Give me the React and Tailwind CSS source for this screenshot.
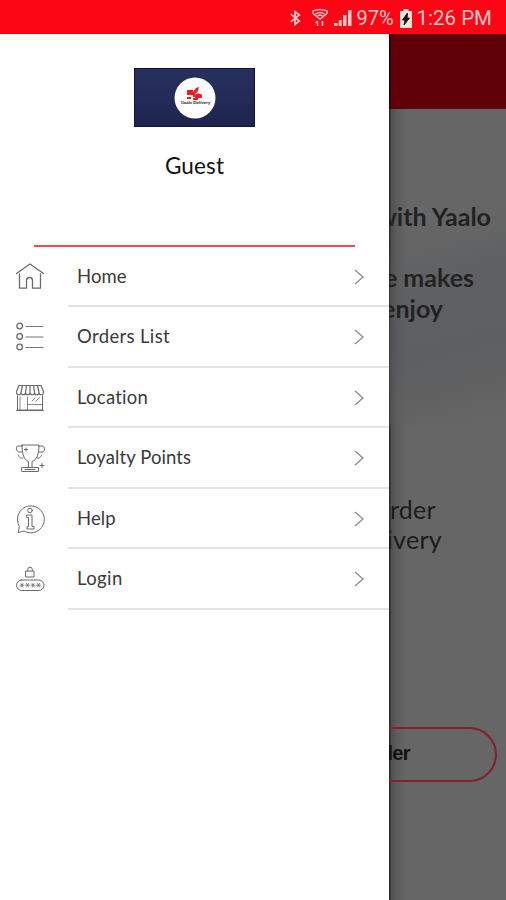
import React from 'react';

function Icon({ children }) {
  return (
    <svg className="h-8 w-8 shrink-0" viewBox="0 0 32 32" fill="none" stroke="#6a6a6a" strokeWidth="1" strokeLinecap="round" strokeLinejoin="round">
      {children}
    </svg>
  );
}

const HomeIcon = () => (
  <Icon>
    <path d="M2.500 12.500 16 3l13.500 9.500M5.500 13v14.200h7v-7.700a3 3 0 0 1 6 0v7.700h8V13" strokeWidth="1.300" />
  </Icon>
);

const ListIcon = () => (
  <Icon>
    <g strokeWidth="1.300">
      <circle cx="5.700" cy="5" r="2.800" />
      <circle cx="5.700" cy="15.500" r="2.800" />
      <circle cx="5.700" cy="26" r="2.800" />
    </g>
    <path d="M12 5.500h17M12 16h17M12 26.500h17" stroke="#777" strokeWidth="1.200" />
  </Icon>
);

const StoreIcon = () => (
  <Icon>
    <path d="M5 3.500h22l2.500 6v1a2.250 2.250 0 0 1-4.500 0 2.250 2.250 0 0 1-4.500 0 2.250 2.250 0 0 1-4.500 0 2.250 2.250 0 0 1-4.500 0 2.250 2.250 0 0 1-4.500 0 2.250 2.250 0 0 1-4.500 0v-1zM7 10.500l1.500-7M11.500 10.500l1-7M16 10.500v-7M20.500 10.500l-1-7M25 10.500l-1.500-7" strokeWidth="1.200" />
    <path d="M3.500 14v14h25V14M2.500 28.500h27" />
    <path d="M6 28V15M13.500 28V15M14 22.500h14M18 19l3-3M21.500 19.500l4-4" strokeWidth=".8" />
  </Icon>
);

const TrophyIcon = () => (
  <Icon>
    <path d="M8 3h17c0 9-2 15-7 16.500v6M8 3c0 9 2 15 6.500 16.500v6" />
    <path d="M8.500 4H4C1.500 4 2 9 4.500 10H8M24.500 4H28c3 0 3.500 6 0 6h-3M4.500 13c0 2 2 4 4.500 3M27.500 13c-.5 2-2 4-4.500 3M8 25.500h16.500v4H8zM11 27.500h10" />
    <path d="M12 6v3M10.500 7.500h3M28 21.500v4M26 23.500h4" />
  </Icon>
);

const HelpIcon = () => (
  <Icon>
    <path d="M5.200 23.200A13.500 13.500 0 1 1 10 28l-5.500 1.500z" />
    <circle cx="16" cy="7.500" r="2.300" />
    <path d="M13 12h5v11.500h2V26h-7v-2.500h1.500V14.500H13z" />
  </Icon>
);

const LoginIcon = () => (
  <Icon>
    <path d="M12 8h8v6h-8zM13.700 8V6.500a2.300 2.300 0 0 1 4.600 0V8" />
    <rect x="2.500" y="17" width="27.500" height="10.500" rx="5.250" />
    <path d="m7 20.500 2 3.500M9 20.500 7 24M6 22.200h4M12.500 20.500l2 3.500M14.500 20.500l-2 3.500M11.500 22.200h4M18 20.500l2 3.500M20 20.500 18 24M17 22.200h4M23.500 20.500l2 3.500M25.500 20.500l-2 3.500M22.500 22.200h4" strokeWidth=".8" />
  </Icon>
);

const items = [
  { label: 'Home', icon: HomeIcon, spacing: 'tracking-[0.1px]' },
  { label: 'Orders List', icon: ListIcon, spacing: 'tracking-[0.35px]' },
  { label: 'Location', icon: StoreIcon, spacing: 'tracking-[0.25px]' },
  { label: 'Loyalty Points', icon: TrophyIcon, spacing: 'tracking-[0.1px]' },
  { label: 'Help', icon: HelpIcon, spacing: 'tracking-[0.1px]' },
  { label: 'Login', icon: LoginIcon, spacing: 'tracking-[0.4px]' },
];

function StatusBar() {
  return (
    <header className="flex h-[34px] shrink-0 items-center justify-end bg-[#fc0515] pr-[14px] pt-0.5 font-[Roboto,sans-serif] text-[19.500px] text-[#ffc6c6]">
      <svg className="h-[18px] w-3" viewBox="0 0 14 20" fill="none" stroke="currentColor" strokeWidth="2">
        <path d="m2 5.500 10 8-5 4v-15l5 4-10 8" />
      </svg>
      <svg className="ml-[11px] h-5 w-4" viewBox="0 0 16 20" fill="none" stroke="currentColor" strokeWidth="1.500">
        <path d="M1 5.500V3q7-3 14 0v2.500L8 11zM3.500 6q4.500-3 9 0M5.500 8q2.500-2 5 0" />
        <path d="M5.500 18v-5M3.500 15l2-2M10.500 13v5" />
      </svg>
      <svg className="ml-1.5 h-5 w-[18px]" viewBox="0 0 18 20" fill="currentColor">
        <path d="M0 15h3.500v3H0zM4.700 12h3v6h-3zM9 7h3.500v11H9zM14 2h3.500v16H14z" />
      </svg>
      <span className="ml-[5px] w-[39px] whitespace-nowrap text-[20px]">97%</span>
      <svg className="ml-1 h-[19px] w-3" viewBox="0 0 12 19">
        <path d="M3.500 0h5v2H12v17H0V2h3.500z" fill="#ffe0dc" />
        <path d="M7.500 4 2.500 11H5l-1 5 5.500-7H7z" fill="#161616" stroke="#161616" />
      </svg>
      <span className="ml-[5px] whitespace-nowrap text-[20.500px]">1:26 PM</span>
    </header>
  );
}

function Brand() {
  return (
    <div className="flex h-[59px] w-[121px] items-center justify-center border border-[#11123f] bg-linear-to-b from-[#28305f] to-[#1e244f]">
      <svg className="h-[42px] w-[42px]" viewBox="0 0 42 42">
        <circle cx="21" cy="21" r="20.500" fill="#fff" />
        <path d="M13 13h6v5h-6zM19 15l3-4 3-1-1 4-3 3v3h-2zM21 18c2-2 5-2 7 0v3h-7zM13 20h4v2h-4zM19 21h5v2h-5z" fill="#ef1c23" />
        <text x="21.500" y="27" textAnchor="middle" textLength="30" lengthAdjust="spacingAndGlyphs" fontSize="4" fontWeight="700" fontStyle="italic" fontFamily="Lato, sans-serif" fill="#222">Yaalo Delivery</text>
      </svg>
    </div>
  );
}

function MenuRow({ item }) {
  const Glyph = item.icon;
  return (
    <li className="flex h-[60.500px] pl-3.5">
      <div className="flex w-[54px] items-center"><Glyph /></div>
      <div className="flex flex-1 items-center justify-between border-b-2 border-[#e3e3e3] pl-[9px] pr-6 pt-0.5">
        <span className={`text-[18.500px] text-[#3a3a3a] ${item.spacing}`}>{item.label}</span>
        <svg className="h-4 w-[11px]" viewBox="0 0 11 16" fill="none" stroke="#8b8b8b" strokeWidth="1.300">
          <path d="m1 1 8 7-8 7" />
        </svg>
      </div>
    </li>
  );
}

function Drawer() {
  return (
    <aside className="flex w-[389px] shrink-0 flex-col bg-white">
      <div className="flex h-[210.500px] flex-col items-center pt-[34px]">
        <Brand />
        <h1 className="mt-6 text-[22.500px] leading-[30px] tracking-[0.15px] text-[#111]">Guest</h1>
      </div>
      <div className="ml-[34px] h-[2px] w-[321px] bg-[#e8504f]" />
      <ul>
        {items.map((item) => <MenuRow key={item.label} item={item} />)}
      </ul>
    </aside>
  );
}

function Backdrop() {
  return (
    <main className="flex min-w-0 flex-1 flex-col overflow-hidden bg-[linear-gradient(to_right,#2b2b2b_0_1px,#4f4f4f_2px,#5d5d5d_8px,#666_18px)]">
      <div className="h-[75px] shrink-0 bg-[#600109] shadow-[inset_2px_0_1px_#350005]" />
      <section className="flex h-[316px] shrink-0 flex-col items-end bg-[linear-gradient(165deg,transparent_35%,#55585e70_58%,#55585e80_75%,#5c5c5c60_88%,transparent_98%)] pt-[92px] text-[25px] font-bold leading-[30.500px] text-[#222] whitespace-nowrap">
        <p className="pr-[15px]">with Yaalo</p>
        <p className="mt-[30.500px] pr-8">we makes</p>
        <p className="pr-[63px]">enjoy</p>
      </section>
      <section className="mt-[70px] flex flex-col items-end text-[25px] leading-[29.500px] tracking-[0.3px] text-[#1b1b1b] whitespace-nowrap">
        <p className="pr-[70px]">order</p>
        <p className="pr-16">delivery</p>
      </section>
      <div className="mt-[173px] flex justify-end pr-[9px]">
        <div className="flex h-[55px] w-[240px] shrink-0 items-center justify-end rounded-full border-2 border-[#851f2a] pb-1 pr-[85px] text-xl font-bold tracking-[-0.6px] text-[#111] font-['Liberation_Sans',sans-serif]">
          Order
        </div>
      </div>
    </main>
  );
}

export default function App() {
  return (
    <div className="flex h-[900px] w-[506px] flex-col overflow-hidden font-[Lato,sans-serif]">
      <StatusBar />
      <div className="flex min-h-0 flex-1">
        <Drawer />
        <Backdrop />
      </div>
    </div>
  );
}
